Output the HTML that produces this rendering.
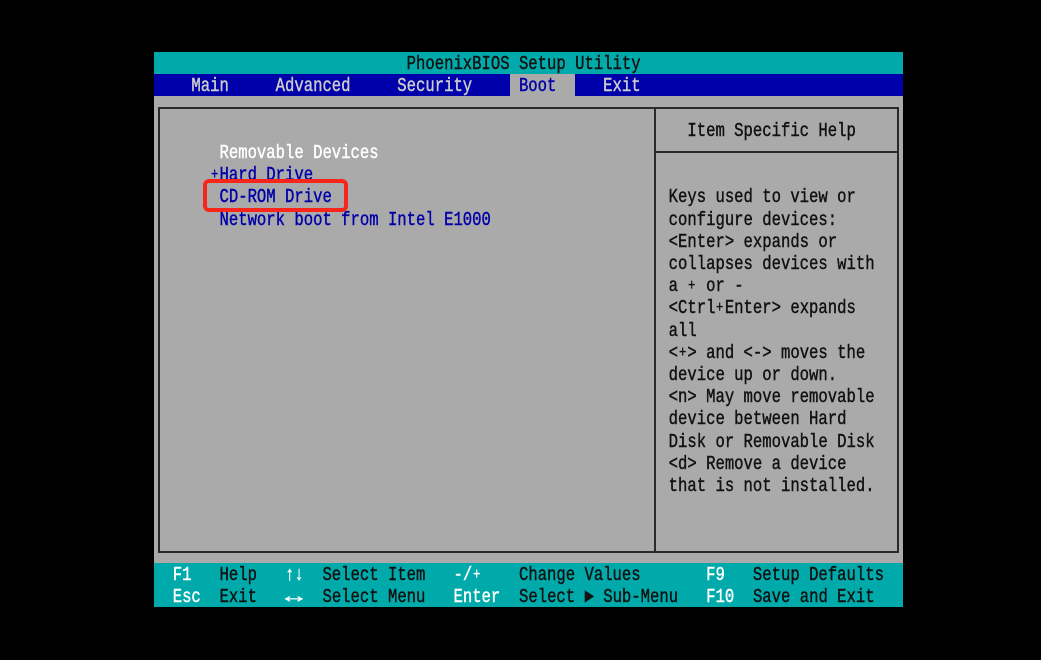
<!DOCTYPE html>
<html>
<head>
<meta charset="utf-8">
<style>
html,body{margin:0;padding:0;background:#000;}
body{width:1041px;height:660px;position:relative;overflow:hidden;}
div{position:absolute;}
.r{left:154px;width:749px;height:17px;margin-top:2.2px;white-space:pre;font-family:"Liberation Mono","DejaVu Sans Mono",monospace;font-size:15.6px;line-height:17px;font-weight:400;-webkit-text-stroke:.35px currentColor;color:#111;transform:scaleY(1.25);transform-origin:0 0;}
.w{color:#fff}.b{color:#0000aa}
.p{display:inline-block;transform:scale(.78)}
.x{display:inline-block;transform:scaleX(1.9);transform-origin:0 50%}
</style>
</head>
<body>
<div style="left:154px;top:52px;width:749px;height:555px;background:#aaa"></div>
<div style="left:154px;top:52px;width:749px;height:22px;background:#00aaaa"></div>
<div style="left:154px;top:74px;width:749px;height:22px;background:#0000aa"></div>
<div style="left:510px;top:74px;width:65px;height:22px;background:#aaa"></div>
<div style="left:154px;top:563px;width:749px;height:44px;background:#00aaaa"></div>
<div style="left:158px;top:106.5px;width:737px;height:442.5px;border:2px solid #2a2a2a"></div>
<div style="left:654px;top:107px;width:2px;height:445px;background:#2a2a2a"></div>
<div style="left:655px;top:151px;width:243px;height:2px;background:#2a2a2a"></div>

<div class="r" style="top:52px">                           PhoenixBIOS Setup Utility</div>
<div class="r" style="top:74.2px;color:#ccc">    Main     Advanced     Security     <span class="b">Boot</span>     Exit</div>
<div class="r" style="top:118.6px">                                                         Item Specific Help</div>
<div class="r w" style="top:140.8px">       Removable Devices</div>
<div class="r b" style="top:163px">      <span class="p">+</span>Hard Drive</div>
<div class="r b" style="top:185.2px">       CD-ROM Drive</div>
<div class="r b" style="top:207.4px">       Network boot from Intel E1000</div>
<div class="r" style="top:185.2px">                                                       Keys used to view or</div>
<div class="r" style="top:207.4px">                                                       configure devices:</div>
<div class="r" style="top:229.6px">                                                       &lt;Enter&gt; expands or</div>
<div class="r" style="top:251.8px">                                                       collapses devices with</div>
<div class="r" style="top:274px">                                                       a <span class="p">+</span> or -</div>
<div class="r" style="top:296.2px">                                                       &lt;Ctrl<span class="p">+</span>Enter&gt; expands</div>
<div class="r" style="top:318.4px">                                                       all</div>
<div class="r" style="top:340.6px">                                                       &lt;<span class="p">+</span>&gt; and &lt;-&gt; moves the</div>
<div class="r" style="top:362.8px">                                                       device up or down.</div>
<div class="r" style="top:385px">                                                       &lt;n&gt; May move removable</div>
<div class="r" style="top:407.2px">                                                       device between Hard</div>
<div class="r" style="top:429.4px">                                                       Disk or Removable Disk</div>
<div class="r" style="top:451.6px">                                                       &lt;d&gt; Remove a device</div>
<div class="r" style="top:473.8px">                                                       that is not installed.</div>
<div class="r" style="top:562.6px">  <span class="w">F1</span>   Help   <span class="w">↑↓</span>  Select Item   <span class="w">-/<span class="p">+</span></span>    Change Values       <span class="w">F9</span>   Setup Defaults</div>
<div class="r" style="top:584.8px">  <span class="w">Esc</span>  Exit   <span class="w x">↔</span>   Select Menu   <span class="w">Enter</span>  Select ► Sub-Menu   <span class="w">F10</span>  Save and Exit</div>

<div style="left:203px;top:178.5px;width:137px;height:25.5px;border:4px solid #f8261a;border-radius:6px;filter:blur(.3px)"></div>
</body>
</html>
